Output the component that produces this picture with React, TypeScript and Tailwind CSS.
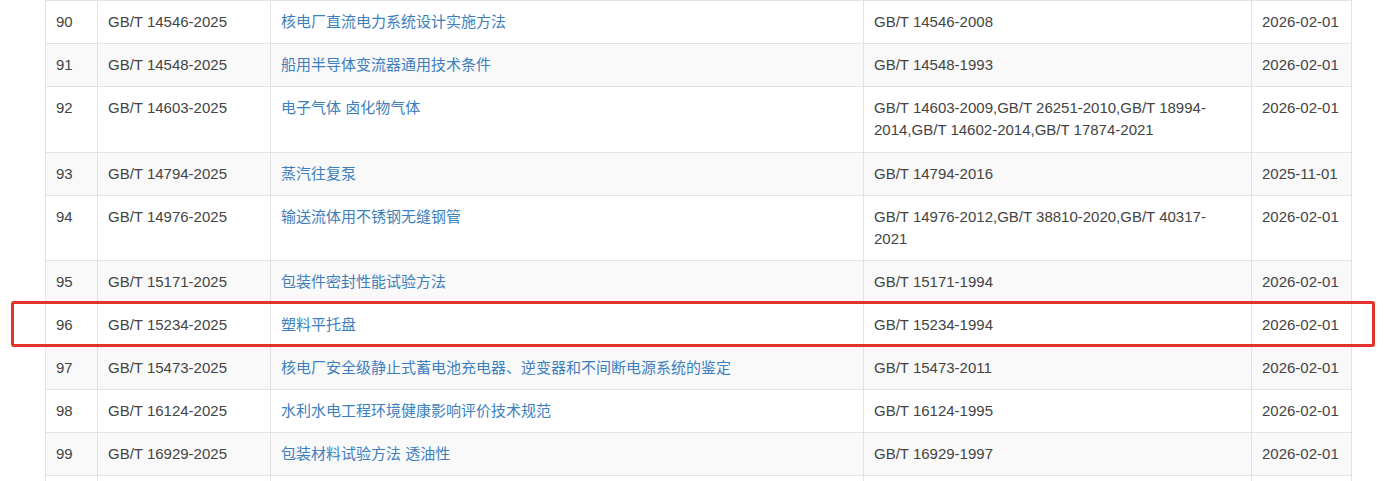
type Row = {
  no: string;
  code: string;
  name: string;
  replaces: string[];
  date: string;
};

const rows: Row[] = [
  { no: "90", code: "GB/T 14546-2025", name: "核电厂直流电力系统设计实施方法", replaces: ["GB/T 14546-2008"], date: "2026-02-01" },
  { no: "91", code: "GB/T 14548-2025", name: "船用半导体变流器通用技术条件", replaces: ["GB/T 14548-1993"], date: "2026-02-01" },
  {
    no: "92",
    code: "GB/T 14603-2025",
    name: "电子气体 卤化物气体",
    replaces: ["GB/T 14603-2009,GB/T 26251-2010,GB/T 18994-", "2014,GB/T 14602-2014,GB/T 17874-2021"],
    date: "2026-02-01",
  },
  { no: "93", code: "GB/T 14794-2025", name: "蒸汽往复泵", replaces: ["GB/T 14794-2016"], date: "2025-11-01" },
  {
    no: "94",
    code: "GB/T 14976-2025",
    name: "输送流体用不锈钢无缝钢管",
    replaces: ["GB/T 14976-2012,GB/T 38810-2020,GB/T 40317-", "2021"],
    date: "2026-02-01",
  },
  { no: "95", code: "GB/T 15171-2025", name: "包装件密封性能试验方法", replaces: ["GB/T 15171-1994"], date: "2026-02-01" },
  { no: "96", code: "GB/T 15234-2025", name: "塑料平托盘", replaces: ["GB/T 15234-1994"], date: "2026-02-01" },
  { no: "97", code: "GB/T 15473-2025", name: "核电厂安全级静止式蓄电池充电器、逆变器和不间断电源系统的鉴定", replaces: ["GB/T 15473-2011"], date: "2026-02-01" },
  { no: "98", code: "GB/T 16124-2025", name: "水利水电工程环境健康影响评价技术规范", replaces: ["GB/T 16124-1995"], date: "2026-02-01" },
  { no: "99", code: "GB/T 16929-2025", name: "包装材料试验方法 透油性", replaces: ["GB/T 16929-1997"], date: "2026-02-01" },
];

const cell = "border border-[#e3e3e3] px-[10px] pt-[10px] align-top leading-[22px]";

export default function App() {
  return (
    <div
      className="relative h-[481px] overflow-hidden bg-white text-[15px] text-[#444]"
      style={{ fontFamily: '"Liberation Sans", "Noto Sans CJK SC", sans-serif' }}
    >
      <table className="ml-[45px] w-[1306px] table-fixed border-collapse">
        <colgroup>
          <col className="w-[52px]" />
          <col className="w-[173px]" />
          <col className="w-[593px]" />
          <col className="w-[388px]" />
          <col className="w-[100px]" />
        </colgroup>
        <tbody>
          {rows.map((r, i) => {
            // the first wrapped row sits one pixel taller in the source page
            const pb = i === 2 ? "pb-[11px]" : "pb-[10px]";
            return (
              <tr key={r.no} className={i % 2 === 1 ? "bg-[#f9f9f9]" : "bg-white"}>
                <td className={`${cell} ${pb}`}>{r.no}</td>
                <td className={`${cell} ${pb}`}>{r.code}</td>
                <td className={`${cell} ${pb}`}>
                  <a href="#" className="text-[#3d7fbd]">
                    {r.name}
                  </a>
                </td>
                <td className={`${cell} ${pb}`}>
                  {r.replaces.map((line, j) => (
                    <div key={j}>{line}</div>
                  ))}
                </td>
                <td className={`${cell} ${pb}`}>{r.date}</td>
              </tr>
            );
          })}
          <tr className="bg-white">
            <td className={`${cell} pb-[10px]`}>&nbsp;</td>
            <td className={`${cell} pb-[10px]`}></td>
            <td className={`${cell} pb-[10px]`}></td>
            <td className={`${cell} pb-[10px]`}></td>
            <td className={`${cell} pb-[10px]`}></td>
          </tr>
        </tbody>
      </table>

      {/* highlight box around row 96 */}
      <div className="pointer-events-none absolute left-[11px] top-[301px] h-[46px] w-[1364px] rounded-[3px] border-[3px] border-[#e3342b]" />
    </div>
  );
}
